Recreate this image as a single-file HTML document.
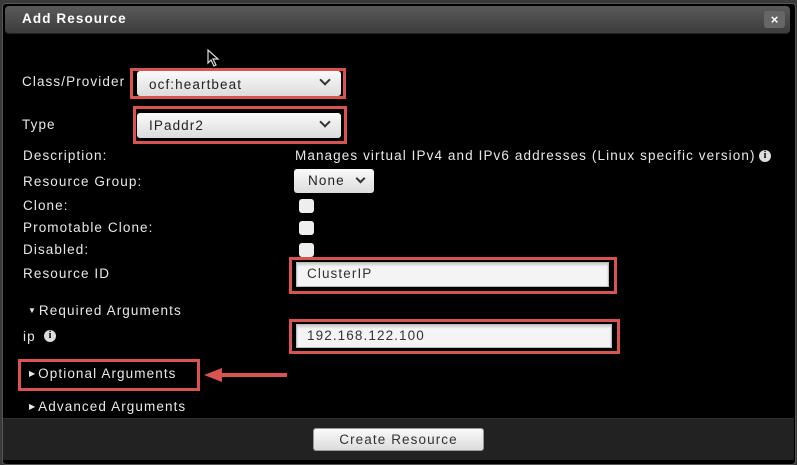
<!DOCTYPE html>
<html><head><style>
body{margin:0;width:797px;height:459px;background:#3a3a3a;position:relative;overflow:hidden;font-family:"Liberation Sans",sans-serif;letter-spacing:1.1px}
.a{position:absolute;white-space:nowrap}
.dlg{left:2px;top:3px;width:792px;height:460px;background:#000;border:1px solid #555;border-radius:4px}
.title{left:5px;top:6px;width:785px;height:27px;background:linear-gradient(#5a5a5a,#3c3c3c);border-radius:4px;border-bottom:1px solid #222}
.t{color:#e8e8e8;font-size:13.5px}
.red{border:3px solid #d9534f;box-sizing:border-box}
.sel{background:linear-gradient(#fafafa,#dcdcdc);border-radius:3px;color:#222;font-size:13.5px;box-sizing:border-box;padding-left:12px}
.inp{background:#f4f4f4;border:1px solid #bbb;box-sizing:border-box;color:#333;font-size:13.5px;padding-left:10px;line-height:22px;box-shadow:inset 0 2px 2px #ccc}
.cb{width:15px;height:14px;background:#eee;border-radius:3px}
.chev{position:absolute;right:12px;top:5px;width:6px;height:6px;border-right:2px solid #333;border-bottom:2px solid #333;transform:rotate(45deg)}
.info{width:12px;height:12px;border-radius:50%;background:#ddd;color:#000;font-size:10px;font-weight:bold;text-align:center;line-height:12px;font-family:"Liberation Serif",serif;letter-spacing:0}
.tri{font-size:8px;letter-spacing:0;vertical-align:2px;margin-right:3px}
</style></head><body>
<div class="a dlg"></div>
<div class="a title"></div>
<div class="a" style="left:22px;top:11px;color:#fff;font-weight:bold;font-size:13.5px">Add Resource</div>
<div class="a" style="left:764px;top:11px;width:21px;height:17px;background:#666;border-radius:3px;color:#fff;font-size:13px;font-weight:bold;text-align:center;line-height:17px;letter-spacing:0">×</div>
<svg class="a" style="left:207px;top:49px" width="14" height="18"><path d="M1 1 L1 14 L4 11 L7 17 L9 16 L6 10 L11 10 Z" fill="#000" stroke="#ddd" stroke-width="1.2"/></svg>

<div class="a t" style="left:22px;top:74px">Class/Provider</div>
<div class="a red" style="left:130px;top:68px;width:216px;height:31px"></div>
<div class="a sel" style="left:137px;top:71px;width:204px;height:25px;line-height:27px">ocf:heartbeat<span class="chev"></span></div>
<div class="a t" style="left:22px;top:117px">Type</div>
<div class="a red" style="left:133px;top:106px;width:214px;height:38px"></div>
<div class="a sel" style="left:137px;top:113px;width:204px;height:25px;line-height:26px">IPaddr2<span class="chev"></span></div>

<div class="a t" style="left:23px;top:148px">Description:</div>
<div class="a t" style="left:295px;top:148px">Manages virtual IPv4 and IPv6 addresses (Linux specific version)</div>
<div class="a info" style="left:759px;top:150px">i</div>
<div class="a t" style="left:23px;top:174px">Resource Group:</div>
<div class="a sel" style="left:294px;top:169px;width:80px;height:24px;line-height:24px;padding-left:14px">None<span class="chev" style="right:10px;top:6px;width:5px;height:5px"></span></div>
<div class="a t" style="left:23px;top:198px">Clone:</div>
<div class="a cb" style="left:299px;top:199px"></div>
<div class="a t" style="left:23px;top:220px">Promotable Clone:</div>
<div class="a cb" style="left:299px;top:221px"></div>
<div class="a t" style="left:23px;top:242px">Disabled:</div>
<div class="a cb" style="left:299px;top:243px"></div>

<div class="a t" style="left:23px;top:266px">Resource ID</div>
<div class="a red" style="left:289px;top:257px;width:328px;height:37px"></div>
<div class="a inp" style="left:296px;top:262px;width:313px;height:25px">ClusterIP</div>

<div class="a t" style="left:28px;top:303px"><span class="tri">▼</span>Required Arguments</div>
<div class="a t" style="left:23px;top:329px">ip</div>
<div class="a info" style="left:44px;top:330px">i</div>
<div class="a red" style="left:289px;top:319px;width:331px;height:35px"></div>
<div class="a inp" style="left:296px;top:324px;width:316px;height:24px">192.168.122.100</div>

<div class="a red" style="left:18px;top:359px;width:182px;height:32px"></div>
<div class="a t" style="left:29px;top:366px"><span class="tri">▶</span>Optional Arguments</div>
<svg class="a" style="left:200px;top:366px" width="90" height="18"><path d="M20 9 H87" stroke="#d9534f" stroke-width="4"/><path d="M4 9 L22 2 L22 16 Z" fill="#d9534f"/></svg>
<div class="a t" style="left:29px;top:399px"><span class="tri">▶</span>Advanced Arguments</div>

<div class="a" style="left:3px;top:418px;width:791px;height:41px;background:#222;border-top:1px solid #2e2e2e"></div>
<div class="a sel" style="left:313px;top:428px;width:171px;height:23px;line-height:22px;text-align:center;padding:0;color:#333;border:1px solid #999">Create Resource</div>
</body></html>
